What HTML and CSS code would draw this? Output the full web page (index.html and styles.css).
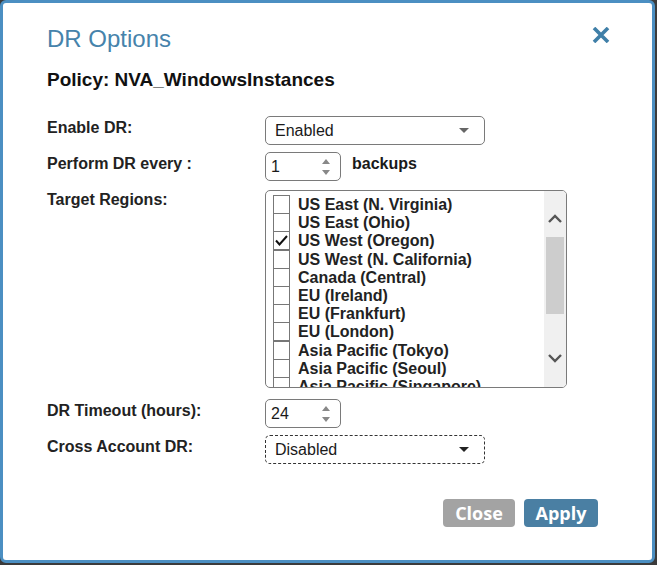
FILE: index.html
```html
<!DOCTYPE html>
<html lang="en"><head>
    <meta charset="UTF-8">
    <meta name="viewport" content="width=device-width, initial-scale=1.0">
    <title>DR Options</title>
    <link rel="stylesheet" href="styles.css">
</head>
<body>
    <div class="dialog">
        <div class="header">
            <h2 class="title">DR Options</h2>
            <button class="close-x" title="Close">
                <svg width="18" height="16" viewBox="0 0 18 16"><path d="M2 1 L16 15 M16 1 L2 15" stroke="#3f7fa8" stroke-width="3.6" stroke-linecap="butt"/></svg>
            </button>
        </div>
        <div class="policy">Policy: NVA_WindowsInstances</div>

        <div class="form">
            <div class="label">Enable DR:</div>
            <div class="field">
                <div class="select">
                    <span>Enabled</span>
                    <svg class="caret" width="10" height="5" viewBox="0 0 10 5"><path d="M0 0 H10 L5 5 Z" fill="#666"/></svg>
                </div>
            </div>

            <div class="label">Perform DR every :</div>
            <div class="field inline">
                <div class="spin">
                    <span>1</span>
                    <svg class="spin-arrows" width="10" height="18" viewBox="0 0 10 18"><path d="M1 6 L5 1 L9 6 Z M1 12 L5 17 L9 12 Z" fill="#888"/></svg>
                </div>
                <span class="unit">backups</span>
            </div>

            <div class="label">Target Regions:</div>
            <div class="field">
                <div class="listbox">
                    <div class="options">
                        <label class="opt"><span class="box"></span>US East (N. Virginia)</label>
                        <label class="opt"><span class="box"></span>US East (Ohio)</label>
                        <label class="opt"><span class="box checked"><svg width="13" height="11" viewBox="0 0 13 11"><path d="M1 5.5 L4.5 9.5 L12 1" fill="none" stroke="#111" stroke-width="2"/></svg></span>US West (Oregon)</label>
                        <label class="opt"><span class="box"></span>US West (N. California)</label>
                        <label class="opt"><span class="box"></span>Canada (Central)</label>
                        <label class="opt"><span class="box"></span>EU (Ireland)</label>
                        <label class="opt"><span class="box"></span>EU (Frankfurt)</label>
                        <label class="opt"><span class="box"></span>EU (London)</label>
                        <label class="opt"><span class="box"></span>Asia Pacific (Tokyo)</label>
                        <label class="opt"><span class="box"></span>Asia Pacific (Seoul)</label>
                        <label class="opt"><span class="box"></span>Asia Pacific (Singapore)</label>
                    </div>
                    <div class="scrollbar">
                        <svg class="chev" width="16" height="10" viewBox="0 0 16 10"><path d="M2 8 L8 2 L14 8" fill="none" stroke="#555" stroke-width="2.4"/></svg>
                        <div class="thumb"></div>
                        <svg class="chev down" width="16" height="10" viewBox="0 0 16 10"><path d="M2 2 L8 8 L14 2" fill="none" stroke="#555" stroke-width="2.4"/></svg>
                    </div>
                </div>
            </div>

            <div class="label">DR Timeout (hours):</div>
            <div class="field">
                <div class="spin">
                    <span>24</span>
                    <svg class="spin-arrows" width="10" height="18" viewBox="0 0 10 18"><path d="M1 6 L5 1 L9 6 Z M1 12 L5 17 L9 12 Z" fill="#888"/></svg>
                </div>
            </div>

            <div class="label">Cross Account DR:</div>
            <div class="field">
                <div class="select focused">
                    <span>Disabled</span>
                    <svg class="caret" width="10" height="5" viewBox="0 0 10 5"><path d="M0 0 H10 L5 5 Z" fill="#222"/></svg>
                </div>
            </div>
        </div>

        <div class="actions">
            <button class="btn btn-close">Close</button>
            <button class="btn btn-apply">Apply</button>
        </div>
    </div>
</body>
</html>
```

FILE: styles.css
```css
body {
    margin: 0;
    background: #3b3b3b;
    font-family: "Liberation Sans", Arial, sans-serif;
    color: #1a1a1a;
}
.dialog {
    box-sizing: border-box;
    width: 655px;
    height: 563px;
    background: #fff;
    border: 3px solid #4b8fc2;
    border-radius: 6px;
    padding: 22px 42px 0 44px;
}
.header {
    display: flex;
    justify-content: space-between;
    align-items: flex-start;
}
.title {
    margin: 0;
    font-size: 24px;
    font-weight: normal;
    color: #4683ab;
    line-height: 28px;
}
.close-x {
    border: none;
    background: none;
    padding: 0;
    margin-top: 2px;
    margin-right: 0;
    cursor: pointer;
}
.policy {
    margin-top: 16px;
    font-size: 19px;
    font-weight: bold;
    color: #111;
}
.form {
    margin-top: 25px;
    display: grid;
    grid-template-columns: 218px 1fr;
    row-gap: 7px;
}
.label {
    font-size: 16px;
    font-weight: bold;
    color: #222;
    padding-top: 3px;
}
.field.inline {
    display: flex;
    align-items: flex-start;
}
.select {
    box-sizing: border-box;
    width: 220px;
    height: 29px;
    border: 1px solid #7a7a7a;
    border-radius: 5px;
    display: flex;
    align-items: center;
    justify-content: space-between;
    padding: 0 15px 0 9px;
    font-size: 16px;
}
.select.focused {
    border: 1px dashed #333;
}
.spin {
    box-sizing: border-box;
    width: 76px;
    height: 29px;
    border: 1px solid #7a7a7a;
    border-radius: 5px;
    display: flex;
    align-items: center;
    justify-content: space-between;
    padding: 0 9px 0 5px;
    font-size: 16px;
}
.unit {
    margin-left: 11px;
    padding-top: 3px;
    font-size: 16px;
    font-weight: bold;
}
.listbox {
    box-sizing: border-box;
    width: 302px;
    height: 198px;
    border: 1px solid #7a7a7a;
    border-radius: 5px;
    display: flex;
    overflow: hidden;
    margin-top: 2px;
    margin-bottom: 4px;
}
.options {
    flex: 1;
    padding: 5px 0 0 7px;
    overflow: hidden;
}
.opt {
    display: flex;
    align-items: center;
    height: 18.2px;
    font-size: 16px;
    font-weight: bold;
    color: #222;
    white-space: nowrap;
}
.box {
    box-sizing: border-box;
    width: 17px;
    height: 19px;
    border: 1px solid #777;
    margin-right: 8px;
    margin-top: -1px;
    background: #fff;
    display: flex;
    align-items: center;
    justify-content: center;
}
.scrollbar {
    width: 22px;
    background: #f0f0f0;
    display: flex;
    flex-direction: column;
    align-items: center;
}
.chev {
    margin-top: 23px;
}
.chev.down {
    margin-top: 39px;
}
.thumb {
    width: 18px;
    height: 77px;
    background: #cdcdcd;
    margin-top: 13px;
}
.actions {
    display: flex;
    justify-content: flex-end;
    gap: 9px;
    margin-top: 35px;
    padding-right: 12px;
}
.btn {
    border: none;
    border-radius: 4px;
    color: #fff;
    font-family: "Open Sans", "Liberation Sans", sans-serif;
    font-weight: bold;
    font-size: 18px;
    height: 28px;
    padding: 0;
    cursor: pointer;
}
.btn-close {
    width: 72px;
    background: #a3a3a3;
}
.btn-apply {
    width: 74px;
    background: #4a7fa3;
}
```
